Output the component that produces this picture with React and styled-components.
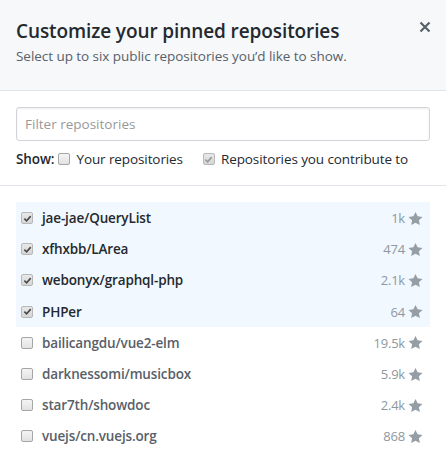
import React from "react";
import styled, { createGlobalStyle } from "styled-components";

const Global = createGlobalStyle`
  html, body { margin: 0; padding: 0; background: #fff; }
  body { font-family: "Open Sans", "Noto Sans", sans-serif; color: #24292e; }
  * { box-sizing: border-box; }
`;

const Dialog = styled.div`
  width: 446px;
  height: 451px;
  overflow: hidden;
  background: #fff;
`;

const Header = styled.div`
  background: #f6f8fa;
  border-bottom: 1px solid #e1e4e8;
  height: 91px;
  padding: 16px 16px 0 16px;
  display: flex;
  justify-content: space-between;
  align-items: flex-start;
`;

const Title = styled.h1`
  margin: 0;
  font-size: 19px;
  font-weight: 600;
  line-height: 30px;
  color: #24292e;
  letter-spacing: -0.1px;
`;

const Subtitle = styled.p`
  margin: 0;
  font-size: 13.5px;
  line-height: 21px;
  color: #586069;
  letter-spacing: -0.05px;
`;

const Close = styled.button`
  border: 0;
  background: none;
  padding: 0;
  margin: 5px -1px 0 0;
  width: 12px;
  height: 12px;
  display: flex;
  color: #586069;
  cursor: pointer;
`;

const Filters = styled.div`
  padding: 16px 16px 0 16px;
  height: 95px;
  border-bottom: 1px solid #e1e4e8;
`;

const Input = styled.input`
  width: 100%;
  height: 34px;
  border: 1px solid #d1d5da;
  border-radius: 3px;
  padding: 6px 8px;
  font-family: inherit;
  font-size: 13.5px;
  color: #24292e;
  box-shadow: inset 0 1px 2px rgba(27, 31, 35, 0.075);
  &::placeholder { color: #999; }
  outline: none;
`;

const ShowRow = styled.div`
  display: flex;
  align-items: center;
  margin-top: 6px;
  height: 24px;
  font-size: 13.5px;
  letter-spacing: -0.1px;
  color: #24292e;
`;

const ShowLabel = styled.span`
  font-weight: 600;
  margin-right: 4px;
`;

const Option = styled.label`
  display: flex;
  align-items: center;
  gap: 6px;
  margin-right: ${(p) => p.$gap || 0}px;
`;

const Box = styled.span`
  width: 12px;
  height: 12px;
  flex: none;
  border: 1px solid ${(p) => (p.$checked ? "#b8b8b8" : "#a6a6a6")};
  border-radius: 2px;
  background: ${(p) =>
    p.$checked ? "linear-gradient(#e8e8e8, #d6d6d6)" : "linear-gradient(#f4f4f4, #e2e2e2)"};
  display: flex;
  align-items: center;
  justify-content: center;
`;

const List = styled.ul`
  list-style: none;
  margin: 16px 16px 0 16px;
  padding: 0;
`;

const Row = styled.li`
  display: flex;
  align-items: center;
  height: 31.2px;
  padding: 1px 7px 0 5px;
  background: ${(p) => (p.$checked ? "#f1f8ff" : "transparent")};
`;

const RepoName = styled.span`
  flex: 1;
  margin-left: 9px;
  font-size: 13.5px;
  font-weight: 600;
  letter-spacing: -0.15px;
  color: ${(p) => (p.$checked ? "#24292e" : "#586069")};
`;

const Stars = styled.span`
  display: flex;
  align-items: center;
  gap: 3px;
  font-size: 13px;
  letter-spacing: -0.2px;
  color: #8f979f;
`;

const CheckMark = ({ color }) => (
  <svg width="9" height="9" viewBox="0 0 10 10">
    <path d="M1.5 5.2 L4 7.6 L8.6 2.4" fill="none" stroke={color} strokeWidth="1.8" />
  </svg>
);

const CheckBox = ({ checked, faded }) => (
  <Box $checked={checked}>{checked && <CheckMark color={faded ? "#9a9a9a" : "#4a4a4a"} />}</Box>
);

const Star = () => (
  <svg width="15" height="15" viewBox="0 0 14 15">
    <path
      fill="#959da5"
      d="M14 6l-4.9-.64L7 1 4.9 5.36 0 6l3.6 3.26L2.67 14 7 11.67 11.33 14l-.93-4.74L14 6z"
    />
  </svg>
);

const repos = [
  { name: "jae-jae/QueryList", stars: "1k", checked: true },
  { name: "xfhxbb/LArea", stars: "474", checked: true },
  { name: "webonyx/graphql-php", stars: "2.1k", checked: true },
  { name: "PHPer", stars: "64", checked: true },
  { name: "bailicangdu/vue2-elm", stars: "19.5k", checked: false },
  { name: "darknessomi/musicbox", stars: "5.9k", checked: false },
  { name: "star7th/showdoc", stars: "2.4k", checked: false },
  { name: "vuejs/cn.vuejs.org", stars: "868", checked: false },
];

export default function App() {
  return (
    <Dialog>
      <Global />
      <Header>
        <div>
          <Title>Customize your pinned repositories</Title>
          <Subtitle>Select up to six public repositories you’d like to show.</Subtitle>
        </div>
        <Close aria-label="Close">
          <svg width="12" height="12" viewBox="0 0 12 12">
            <path d="M1.5 1.5 L10.5 10.5 M10.5 1.5 L1.5 10.5" stroke="#586069" strokeWidth="2.2" />
          </svg>
        </Close>
      </Header>
      <Filters>
        <Input placeholder="Filter repositories" />
        <ShowRow>
          <ShowLabel>Show:</ShowLabel>
          <Option $gap={20}>
            <CheckBox checked={false} />
            Your repositories
          </Option>
          <Option>
            <CheckBox checked faded />
            Repositories you contribute to
          </Option>
        </ShowRow>
      </Filters>
      <List>
        {repos.map((r) => (
          <Row key={r.name} $checked={r.checked}>
            <CheckBox checked={r.checked} />
            <RepoName $checked={r.checked}>{r.name}</RepoName>
            <Stars>
              {r.stars}
              <Star />
            </Stars>
          </Row>
        ))}
      </List>
    </Dialog>
  );
}
